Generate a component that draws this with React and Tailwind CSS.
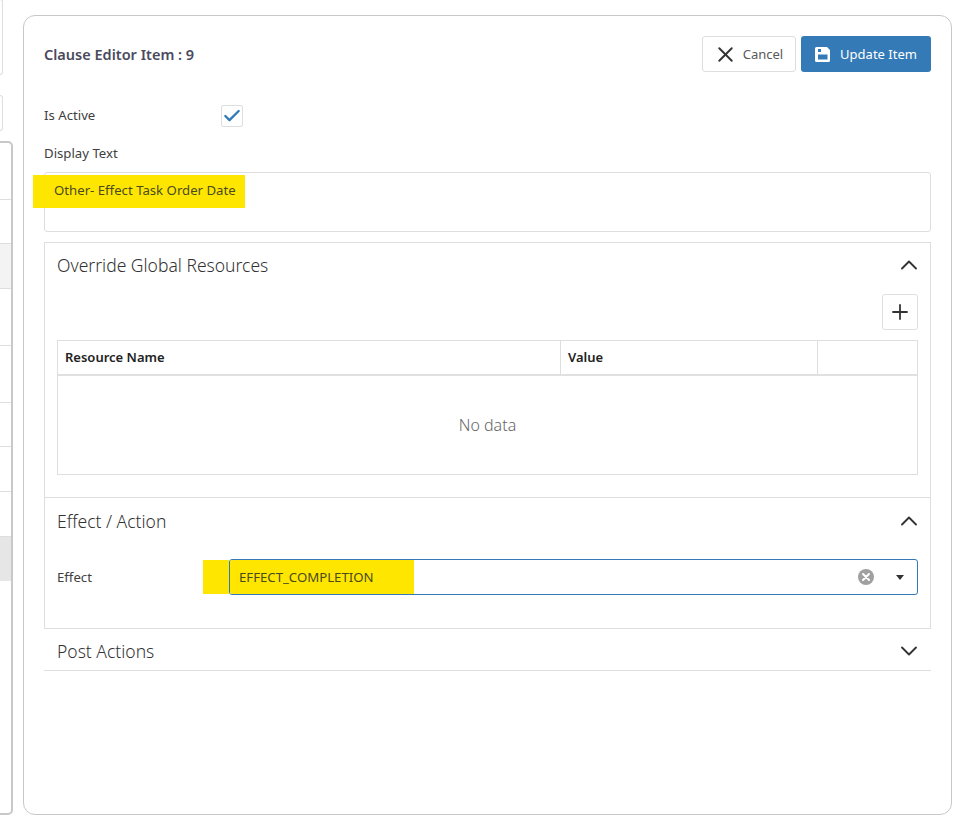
import { Check, ChevronDown, ChevronUp, Plus, X } from "lucide-react";

function SideRow({ height, shade }) {
    return <div className={`border-b border-[#dedede] ${shade}`} style={{ height }} />;
}

function SectionTitle({ title, open }) {
    return (
        <div className="flex items-center justify-between h-6">
            <span className="text-[17.5px] font-light leading-6 text-[#333]">{title}</span>
            {open
                ? <ChevronUp size={28} strokeWidth={1.6} className="text-[#333] -mr-[5px]" />
                : <ChevronDown size={28} strokeWidth={1.6} className="text-[#333] -mr-[5px]" />}
        </div>
    );
}

function SideColumn() {
    return (
        <div className="w-[13px] shrink-0 h-[825px] flex flex-col overflow-hidden">
            <div className="h-[76px] w-[3px] -mt-px border border-l-0 border-[#dedede] rounded-r-[3px] shrink-0" />
            <div className="h-[36px] w-[3px] mt-[20px] border border-l-0 border-[#dedede] rounded-r-[3px] shrink-0" />
            <div className="h-[674px] mt-[10px] border-2 border-l-0 border-[#c8c8c8] rounded-r-[5px] shrink-0">
                <SideRow height={57} />
                <SideRow height={44} />
                <SideRow height={45} shade="bg-[#f3f3f3]" />
                <SideRow height={57} />
                <SideRow height={57} />
                <SideRow height={44} />
                <SideRow height={45} />
                <SideRow height={45} />
                <div className="h-[44px] bg-[#e6e6e6]" />
            </div>
        </div>
    );
}

export default function App() {
    return (
        <div className="w-[957px] h-[825px] overflow-hidden bg-white flex font-['Noto_Sans','Open_Sans',sans-serif] text-[#404040]">
            <SideColumn />
            <div className="ml-[10px] mt-[15px] w-[929px] h-[800px] border border-[#c8c8c8] rounded-[12px] px-5 shrink-0">
                <div className="flex items-center justify-between mt-5 h-9">
                    <h1 className="mt-px text-[14.5px] font-semibold text-[#4a4a5e]">Clause Editor Item : 9</h1>
                    <div className="flex gap-[5px]">
                        <button className="h-9 w-[94px] pr-[2px] flex items-center justify-center gap-[5px] border border-[#dedede] rounded-[3px] text-[13px] text-[#595959]">
                            <X size={25} strokeWidth={1.8} className="text-[#333]" />
                            <span className="mt-px">Cancel</span>
                        </button>
                        <button className="h-9 w-[130px] flex items-center justify-center gap-[10px] rounded-[3px] bg-[#337ab7] text-[13px] text-white">
                            <svg width="15" height="15" viewBox="0 0 15 15" fill="currentColor">
                                <path fillRule="evenodd" d="M1.500 0H12l3 3v10.500a1.500 1.500 0 0 1-1.500 1.500h-12A1.500 1.500 0 0 1 0 13.500v-12A1.500 1.500 0 0 1 1.500 0zM3 2v3h3V2zM3 7.500v5h9.500v-5z" />
                            </svg>
                            <span className="mt-px">Update Item</span>
                        </button>
                    </div>
                </div>

                <div className="flex items-center mt-[33px] h-[22px]">
                    <span className="w-[177px] text-[13.2px]">Is Active</span>
                    <span className="w-[22px] h-[22px] flex items-center justify-center border border-[#dedede] rounded-[2px]">
                        <Check size={20} strokeWidth={2.8} className="text-[#337ab7] shrink-0" />
                    </span>
                </div>

                <div className="mt-[17px] h-[18px] leading-[18px] text-[13.2px]">Display Text</div>

                <div className="mt-[10px] h-[60px] border border-[#dedede] rounded-[3px]">
                    <span className="block -ml-[12px] mt-[2px] w-[212px] h-[33px] pl-[21px] leading-[31px] bg-[#ffe600] text-[13.2px] text-[#4a4a20]">
                        Other- Effect Task Order Date
                    </span>
                </div>

                <div className="mt-[10px] border border-b-0 border-[#dedede] px-3 pb-[22px]">
                    <div className="pt-[10px]">
                        <SectionTitle title="Override Global Resources" open />
                    </div>
                    <div className="flex justify-end mt-[17px]">
                        <button className="w-9 h-9 flex items-center justify-center border border-[#dedede] rounded-[3px]">
                            <Plus size={24} strokeWidth={1.8} className="text-[#333]" />
                        </button>
                    </div>
                    <div className="mt-[10px] border border-[#dedede]">
                        <div className="flex h-[35px] items-center border-b-2 border-[#e0e0e0] text-[13px] font-semibold text-[#222]">
                            <div className="w-[503px] h-full pt-px flex items-center px-[7px] border-r border-[#dedede]">Resource Name</div>
                            <div className="w-[257px] h-full pt-px flex items-center px-[7px] border-r border-[#dedede]">Value</div>
                        </div>
                        <div className="h-[98px] flex items-center justify-center text-[16px] font-light text-[#666]">No data</div>
                    </div>
                </div>

                <div className="border border-[#dedede] px-3 h-[132px]">
                    <div className="pt-[11px]">
                        <SectionTitle title="Effect / Action" open />
                    </div>
                    <div className="flex items-center mt-[26px] h-[36px]">
                        <span className="w-[146px] mt-px text-[13.2px] shrink-0">Effect</span>
                        <span className="w-[26px] h-[34px] bg-[#ffe600] shrink-0" />
                        <div className="flex-1 h-[36px] flex items-center border border-[#337ab7] rounded-[3px] relative">
                            <span className="w-[184px] h-[34px] pl-[9px] leading-[34px] bg-[#ffe600] text-[13.2px] text-[#4a4a20] rounded-l-[2px]">EFFECT_COMPLETION</span>
                            <svg className="absolute right-[42px] top-[8px]" width="18" height="18" viewBox="0 0 18 18">
                                <circle cx="9" cy="9" r="8" fill="#a0a0a0" />
                                <path d="M6 6l6 6M12 6l-6 6" stroke="#fff" strokeWidth="2" strokeLinecap="round" />
                            </svg>
                            <svg className="absolute right-[13px] top-[15px]" width="8" height="5" viewBox="0 0 8 5">
                                <path d="M0 0h8L4 5z" fill="#333" />
                            </svg>
                        </div>
                    </div>
                </div>

                <div className="border-b border-[#dedede] px-[13px] h-[42px] pt-[10px]">
                    <SectionTitle title="Post Actions" />
                </div>
            </div>
        </div>
    );
}
